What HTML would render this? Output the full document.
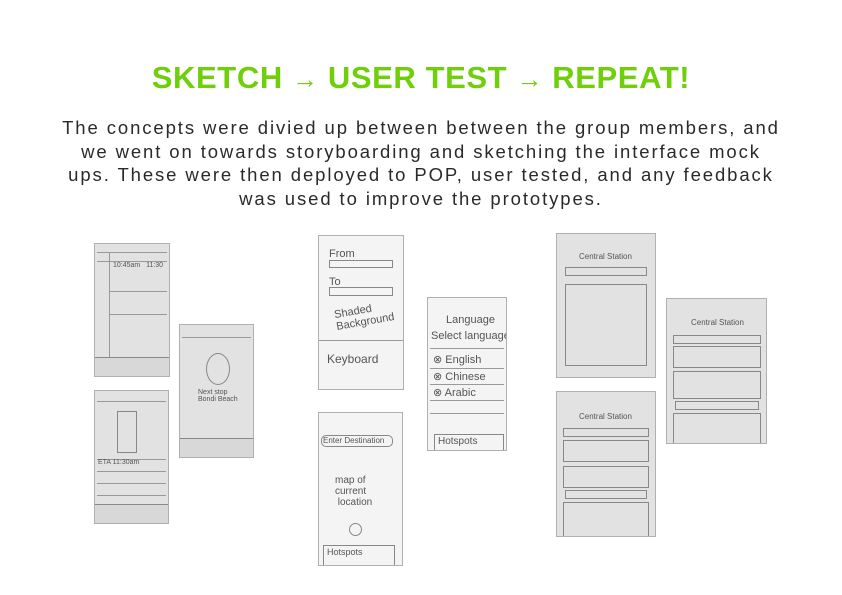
<!DOCTYPE html>
<html><head><meta charset="utf-8"><style>
html,body{margin:0;padding:0;background:#fff;}
body{width:842px;height:595px;position:relative;overflow:hidden;font-family:"Liberation Sans",sans-serif;}
.t{position:absolute;left:0;width:842px;top:60px;text-align:center;color:#6fcf0a;font-weight:bold;font-size:31px;letter-spacing:0.6px;line-height:36px;}
.t span{font-weight:normal;font-size:26px;}
.p{position:absolute;left:0;width:842px;top:116px;text-align:center;color:#2a2a2a;font-size:18.5px;letter-spacing:1.9px;line-height:23.5px;}
.s{position:absolute;box-sizing:border-box;border:1px solid #b0b0b0;overflow:hidden;font-family:"Liberation Sans",sans-serif;color:#555;}
.g{background:#e2e2e2;}
.w{background:#f4f4f4;}
.l{position:absolute;left:2px;right:2px;height:1px;background:#999;}
.h{position:absolute;font-size:9px;color:#555;white-space:nowrap;}
.bar{position:absolute;left:0;right:0;bottom:0;height:18px;border-top:1px solid #888;background:#d8d8d8;}
.bx{position:absolute;border:1px solid #888;}
</style></head><body>
<div class="t">SKETCH <span>→</span> USER TEST <span>→</span> REPEAT!</div>
<div class="p">The concepts were divied up between between the group members, and<br>we went on towards storyboarding and sketching the interface mock<br>ups. These were then deployed to POP, user tested, and any feedback<br>was used to improve the prototypes.</div>

<div class="s g" style="left:94px;top:243px;width:76px;height:134px;">
<div class="l" style="top:8px"></div><div class="l" style="top:17px"></div>
<div class="l" style="top:47px;left:14px"></div><div class="l" style="top:70px;left:14px"></div>
<div style="position:absolute;left:14px;top:8px;bottom:18px;width:1px;background:#999"></div>
<div class="h" style="left:18px;top:18px;font-size:7px">10:45am &nbsp; 11:30</div>
<div class="bar"></div></div>

<div class="s g" style="left:94px;top:390px;width:75px;height:134px;">
<div class="l" style="top:10px"></div>
<div class="bx" style="left:22px;top:20px;width:18px;height:40px"></div>
<div class="l" style="top:68px"></div><div class="l" style="top:80px"></div><div class="l" style="top:92px"></div><div class="l" style="top:104px"></div>
<div class="h" style="left:3px;top:68px;font-size:7px">ETA 11:30am</div>
<div class="bar"></div></div>

<div class="s g" style="left:179px;top:324px;width:75px;height:134px;">
<div class="l" style="top:12px"></div>
<div class="bx" style="left:26px;top:28px;width:22px;height:30px;border-radius:50%"></div>
<div class="h" style="left:18px;top:64px;font-size:7px">Next stop<br>Bondi Beach</div>
<div class="bar"></div></div>

<div class="s w" style="left:318px;top:235px;width:86px;height:155px;">
<div class="h" style="left:10px;top:12px;font-size:11px">From</div>
<div class="bx" style="left:10px;top:24px;width:62px;height:6px"></div>
<div class="h" style="left:10px;top:40px;font-size:11px">To</div>
<div class="bx" style="left:10px;top:51px;width:62px;height:7px"></div>
<div class="h" style="left:16px;top:68px;font-size:11px;transform:rotate(-10deg)">Shaded<br>Background</div>
<div class="l" style="top:104px;left:0;right:0"></div>
<div class="h" style="left:8px;top:116px;font-size:12px">Keyboard</div></div>

<div class="s w" style="left:318px;top:412px;width:85px;height:154px;">
<div class="bx" style="left:2px;top:22px;width:70px;height:10px;border-radius:5px"></div>
<div class="h" style="left:4px;top:23px;font-size:8px">Enter Destination</div>
<div class="h" style="left:16px;top:62px;font-size:10px">map of<br>current<br>&nbsp;location</div>
<div class="bx" style="left:30px;top:110px;width:11px;height:11px;border-radius:50%"></div>
<div class="bx" style="left:4px;top:132px;width:70px;height:22px"></div>
<div class="h" style="left:8px;top:134px;font-size:9px">Hotspots</div></div>

<div class="s w" style="left:427px;top:297px;width:80px;height:154px;">
<div class="h" style="left:18px;top:16px;font-size:11px">Language</div>
<div class="h" style="left:3px;top:32px;font-size:11px">Select language</div>
<div class="l" style="top:50px"></div><div class="l" style="top:70px"></div><div class="l" style="top:86px"></div><div class="l" style="top:102px"></div><div class="l" style="top:115px"></div>
<div class="h" style="left:5px;top:55px;font-size:11px">⊗ English</div>
<div class="h" style="left:5px;top:72px;font-size:11px">⊗ Chinese</div>
<div class="h" style="left:5px;top:88px;font-size:11px">⊗ Arabic</div>
<div class="bx" style="left:6px;top:136px;width:68px;height:18px"></div>
<div class="h" style="left:10px;top:138px;font-size:10px">Hotspots</div></div>

<div class="s g" style="left:556px;top:233px;width:100px;height:145px;">
<div class="h" style="left:22px;top:18px;font-size:8px">Central Station</div>
<div class="bx" style="left:8px;top:33px;width:80px;height:7px"></div>
<div class="bx" style="left:8px;top:50px;width:80px;height:80px"></div></div>

<div class="s g" style="left:556px;top:391px;width:100px;height:146px;">
<div class="h" style="left:22px;top:20px;font-size:8px">Central Station</div>
<div class="bx" style="left:6px;top:36px;width:84px;height:7px"></div>
<div class="bx" style="left:6px;top:48px;width:84px;height:20px"></div>
<div class="bx" style="left:6px;top:74px;width:84px;height:20px"></div>
<div class="bx" style="left:8px;top:98px;width:80px;height:7px"></div>
<div class="bx" style="left:6px;top:110px;width:84px;height:34px"></div></div>

<div class="s g" style="left:666px;top:298px;width:101px;height:146px;">
<div class="h" style="left:24px;top:19px;font-size:8px">Central Station</div>
<div class="bx" style="left:6px;top:36px;width:86px;height:7px"></div>
<div class="bx" style="left:6px;top:47px;width:86px;height:20px"></div>
<div class="bx" style="left:6px;top:72px;width:86px;height:26px"></div>
<div class="bx" style="left:8px;top:102px;width:82px;height:7px"></div>
<div class="bx" style="left:6px;top:114px;width:86px;height:30px"></div></div>
</body></html>
